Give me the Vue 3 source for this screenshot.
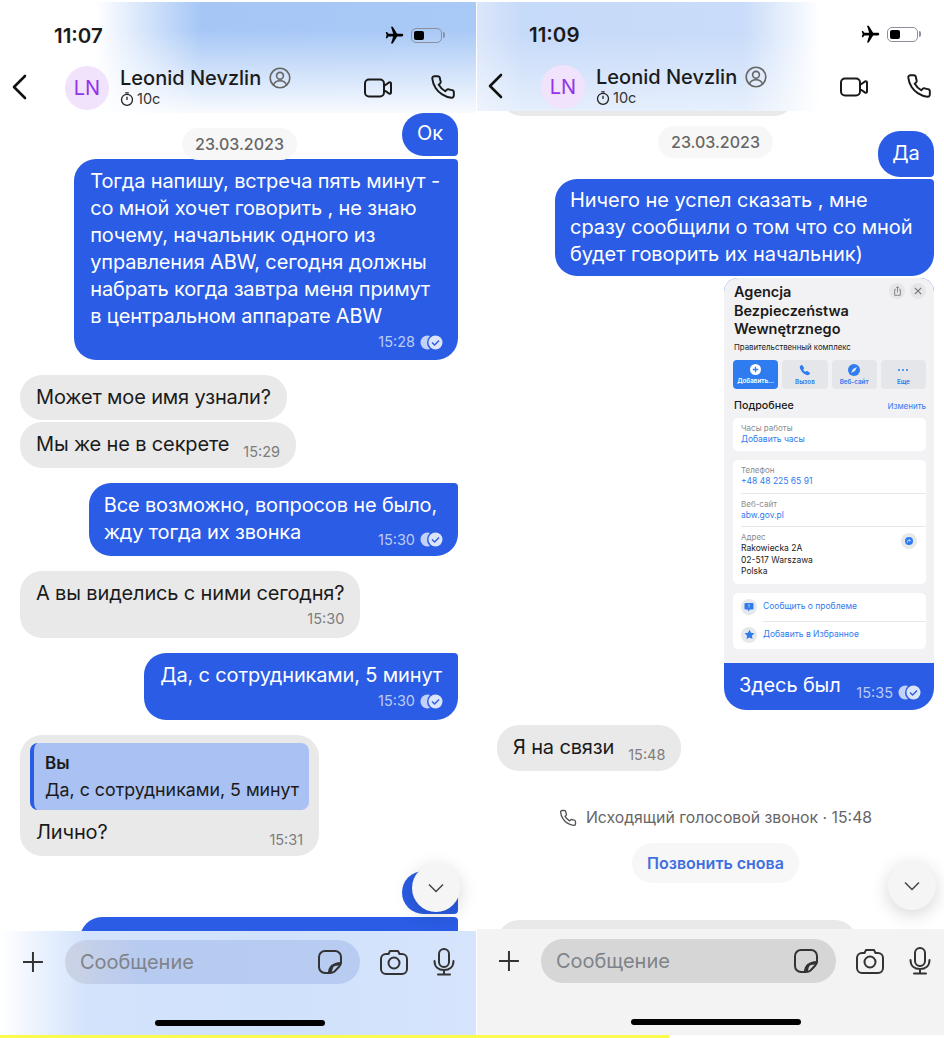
<template>
  <div class="page">
    <div class="screens">
      <section v-for="screen in screens" :key="screen.time" class="screen" :class="screen.cls">
        <div class="chat">
          <template v-for="(m, i) in screen.messages" :key="i">
            <div v-if="m.type === 'call'" class="call">
              <svg width="18" height="18" viewBox="0 0 24 24" fill="none" stroke="#555" stroke-width="1.8">
                <path :d="phonePath" />
              </svg>
              <span>{{ m.text }}</span>
            </div>
            <div v-else-if="m.type === 'again'" class="again">{{ m.text }}</div>
            <div v-else class="bubble" :class="[m.side, m.cls, { cont: m.cont, stub: m.stub, flat: m.flat, tail: m.tail, tight: m.tight, photo: m.type === 'card' }]">
              <div v-if="m.type === 'card'" class="card">
                <div class="card-head">
                  <h3>Agencja<br />Bezpieczeństwa<br />Wewnętrznego</h3>
                  <div class="card-tools">
                    <span class="tool">
                      <svg width="9" height="10" viewBox="0 0 12 14" fill="none" stroke="#777" stroke-width="1.2">
                        <path d="M3.5 5H2v8h8V5H8.5M6 9V1M3.8 3.2 6 1l2.2 2.2" />
                      </svg>
                    </span>
                    <span class="tool">
                      <svg width="8" height="8" viewBox="0 0 10 10" stroke="#777" stroke-width="1.5">
                        <path d="M1 1l8 8M9 1l-8 8" />
                      </svg>
                    </span>
                  </div>
                </div>
                <p class="card-sub">Правительственный комплекс</p>
                <div class="card-actions">
                  <div class="action primary">
                    <svg width="11" height="11" viewBox="0 0 12 12">
                      <circle cx="6" cy="6" r="6" fill="#fff" />
                      <path d="M6 3v6M3 6h6" stroke="#2f7bf0" stroke-width="1.4" />
                    </svg>
                    <span>Добавить...</span>
                  </div>
                  <div class="action">
                    <svg width="12" height="12" viewBox="0 0 24 24" fill="#2f7bf0">
                      <path d="M6.6 2.5 10 7.6c.4.6.3 1.3-.2 1.8L8 11.2a15 15 0 0 0 4.800 4.800l1.800-1.800c.5-.5 1.200-.6 1.800-.2l5.100 3.400c.7.5.8 1.400.3 2l-2 2.200c-.7.7-1.700 1-2.700.8C10 21 3 14 1.600 6.900c-.2-1 .1-2 .8-2.700l2.200-2c.6-.5 1.500-.4 2 .3z" />
                    </svg>
                    <span>Вызов</span>
                  </div>
                  <div class="action">
                    <svg width="12" height="12" viewBox="0 0 12 12">
                      <circle cx="6" cy="6" r="6" fill="#2f7bf0" />
                      <path d="M9 3 7 7 3 9l2-4z" fill="#e4e6ea" />
                    </svg>
                    <span>Веб-сайт</span>
                  </div>
                  <div class="action">
                    <svg width="12" height="12" viewBox="0 0 12 12" fill="#2f7bf0">
                      <circle cx="2" cy="6" r="1" />
                      <circle cx="6" cy="6" r="1" />
                      <circle cx="10" cy="6" r="1" />
                    </svg>
                    <span>Еще</span>
                  </div>
                </div>
                <div class="card-title">
                  <b>Подробнее</b>
                  <span>Изменить</span>
                </div>
                <div class="panel">
                  <div class="row">
                    <small>Часы работы</small>
                    <a>Добавить часы</a>
                  </div>
                </div>
                <div class="panel">
                  <div class="row">
                    <small>Телефон</small>
                    <a>+48 48 225 65 91</a>
                  </div>
                  <div class="row">
                    <small>Веб-сайт</small>
                    <a>abw.gov.pl</a>
                  </div>
                  <div class="row address">
                    <small>Адрес</small>
                    <span>Rakowiecka 2A</span>
                    <span>02-517 Warszawa</span>
                    <span>Polska</span>
                    <i class="route">
                      <svg width="8" height="8" viewBox="0 0 8 8">
                        <circle cx="4" cy="4" r="4" fill="#2f7bf0" />
                        <path d="M2.500 5.500V4.200c0-.5.300-.8.800-.8h2M4.300 2.300l1.100 1.100-1.100 1.100" fill="none" stroke="#fff" stroke-width=".7" />
                      </svg>
                    </i>
                  </div>
                </div>
                <div class="panel links">
                  <div class="link">
                    <i>
                      <svg width="10" height="10" viewBox="0 0 10 10">
                        <path d="M1.500 1h7a1 1 0 0 1 1 1v4.500a1 1 0 0 1-1 1H6L4 9.500V7.500H1.500a1 1 0 0 1-1-1V2a1 1 0 0 1 1-1z" fill="#2f7bf0" />
                        <path d="M5 2.300v2.400M5 5.500v.6" stroke="#e9edf3" stroke-width=".9" />
                      </svg>
                    </i>
                    <a>Сообщить о проблеме</a>
                  </div>
                  <div class="link">
                    <i>
                      <svg width="11" height="11" viewBox="0 0 24 24" fill="#2f7bf0">
                        <path d="m12 1.500 3.200 6.900 7.500.9-5.500 5.200 1.400 7.500L12 18.300l-6.600 3.700 1.400-7.500L1.300 9.300l7.500-.9z" />
                      </svg>
                    </i>
                    <a>Добавить в Избранное</a>
                  </div>
                </div>
              </div>

              <div v-if="m.reply" class="reply">
                <b>{{ m.reply.author }}</b>
                <span>{{ m.reply.text }}</span>
              </div>

              <div class="lines" v-if="m.lines">
                <div
                  v-for="(line, n) in m.lines"
                  :key="n"
                  class="line"
                  :class="{ inline: m.meta && m.meta.inline && n === m.lines.length - 1 }"
                >
                  <span>{{ line }}</span>
                  <span v-if="m.meta && m.meta.inline && n === m.lines.length - 1" class="meta">
                    {{ m.meta.time }}
                    <svg v-if="m.side === 'out'" class="checks" width="24" height="15" viewBox="0 0 24 15">
                      <circle cx="7.500" cy="7.500" r="7" fill="#c3d1f7" />
                      <circle cx="15.500" cy="7.500" r="8.500" fill="#2a5ce5" />
                      <circle cx="15.500" cy="7.500" r="7" fill="#dbe4fb" />
                      <path d="M12 7.500l2.600 2.600L19 5.600" fill="none" stroke="#2a5ce5" stroke-width="1.400" />
                    </svg>
                  </span>
                </div>
              </div>
              <div v-if="m.meta && !m.meta.inline" class="meta own">
                {{ m.meta.time }}
                <svg v-if="m.side === 'out'" class="checks" width="24" height="15" viewBox="0 0 24 15">
                  <circle cx="7.500" cy="7.500" r="7" fill="#c3d1f7" />
                  <circle cx="15.500" cy="7.500" r="8.500" fill="#2a5ce5" />
                  <circle cx="15.500" cy="7.500" r="7" fill="#dbe4fb" />
                  <path d="M12 7.500l2.600 2.600L19 5.600" fill="none" stroke="#2a5ce5" stroke-width="1.400" />
                </svg>
              </div>
            </div>
          </template>
        </div>

        <div class="date-pill">23.03.2023</div>

        <button class="down">
          <svg width="18" height="10" viewBox="0 0 18 10" fill="none" stroke="#444" stroke-width="1.500">
            <path d="M2 1.500 9 8.500l7-7" />
          </svg>
        </button>

        <header class="top">
          <div class="status">
            <span class="clock">{{ screen.time }}</span>
            <div class="status-icons">
              <svg width="21" height="21" viewBox="0 0 24 24" fill="#000">
                <path transform="rotate(90 12 12)" d="M21 16v-2l-8-5V3.500c0-.83-.67-1.500-1.500-1.500S10 2.670 10 3.500V9l-8 5v2l8-2.500V19l-2 1.500V22l3.500-1 3.500 1v-1.500L13 19v-5.500l8 2.500z" />
              </svg>
              <div class="battery"><i></i></div>
            </div>
          </div>
          <div class="nav">
            <svg class="back" width="16" height="26" viewBox="0 0 16 26" fill="none" stroke="#111" stroke-width="2.600" stroke-linecap="round" stroke-linejoin="round">
              <path d="M14 2 3 13l11 11" />
            </svg>
            <div class="avatar">LN</div>
            <div class="who">
              <div class="name">
                Leonid Nevzlin
                <svg width="22" height="22" viewBox="0 0 22 22" fill="none" stroke="#666" stroke-width="1.600">
                  <circle cx="11" cy="11" r="9.800" />
                  <circle cx="11" cy="8.800" r="3.400" />
                  <path d="M4.500 18c1-3 3.500-4.200 6.500-4.200s5.500 1.200 6.500 4.200" />
                </svg>
              </div>
              <div class="timer">
                <svg width="14" height="14" viewBox="0 0 14 14" fill="none" stroke="#222" stroke-width="1.300">
                  <circle cx="7" cy="7.800" r="5.500" />
                  <path d="M7 4.800V8M5.200.8h3.600" />
                </svg>
                10с
              </div>
            </div>
            <div class="nav-actions">
              <svg width="28" height="22" viewBox="0 0 28 22" fill="none" stroke="#1a1a1a" stroke-width="2" stroke-linejoin="round">
                <rect x="1" y="2.500" width="19" height="17" rx="4" />
                <path d="M20 9l5.200-3.600c.8-.5 1.800 0 1.800 1v9.200c0 1-1 1.500-1.800 1L20 13z" />
              </svg>
              <svg class="call-icon" width="26" height="26" viewBox="0 0 24 24" fill="none" stroke="#1a1a1a" stroke-width="1.800">
                <path :d="phonePath" />
              </svg>
            </div>
          </div>
        </header>

        <footer class="bottom">
          <div class="composer">
            <svg width="22" height="22" viewBox="0 0 22 22" stroke="#333" stroke-width="2">
              <path d="M11 1v20M1 11h20" />
            </svg>
            <div class="input">
              <span>Сообщение</span>
              <svg width="26" height="26" viewBox="0 0 26 26" fill="none" stroke="#333" stroke-width="2" stroke-linejoin="round">
                <path d="M8 2h10a6 6 0 0 1 6 6v5c0 2-.8 3.500-2 4.800l-4.500 4.700C16.200 23.600 15 24 13 24H8a6 6 0 0 1-6-6V8a6 6 0 0 1 6-6z" />
                <path d="M12 24c0-6 3-9.500 12-10-1 .9-3.500 2-6 2-2 0-3.500 3-4 7" />
              </svg>
            </div>
            <div class="composer-tools">
              <svg width="28" height="26" viewBox="0 0 28 26" fill="none" stroke="#333" stroke-width="2" stroke-linejoin="round">
                <path d="M6 5h2.500l1.500-3h8l1.500 3H22a5 5 0 0 1 5 5v10a5 5 0 0 1-5 5H6a5 5 0 0 1-5-5V10a5 5 0 0 1 5-5z" />
                <circle cx="14" cy="14" r="5.500" />
              </svg>
              <svg width="22" height="28" viewBox="0 0 22 28" fill="none" stroke="#333" stroke-width="2" stroke-linecap="round">
                <rect x="6" y="1" width="10" height="18" rx="5" />
                <path d="M1.500 13c0 6 4 9 9.500 9s9.500-3 9.500-9M11 22v4.500M5 26.500h12" />
              </svg>
            </div>
          </div>
          <div class="home"></div>
        </footer>
      </section>
    </div>
    <div class="strip"></div>
  </div>
</template>

<script setup>
const phonePath =
  'M22 16.920v3a2 2 0 0 1-2.180 2 19.790 19.790 0 0 1-8.630-3.070 19.500 19.500 0 0 1-6-6 19.790 19.790 0 0 1-3.070-8.670A2 2 0 0 1 4.110 2h3a2 2 0 0 1 2 1.720c.13.96.36 1.900.7 2.810a2 2 0 0 1-.45 2.110L8.090 9.910a16 16 0 0 0 6 6l1.270-1.270a2 2 0 0 1 2.110-.45c.91.34 1.850.57 2.810.7A2 2 0 0 1 22 16.920z';

const screens = [
  {
    time: '11:07',
    cls: 'first',
    messages: [
      { side: 'out', lines: ['Ок'], tail: true },
      {
        side: 'out',
        cont: true,
        cls: 'roomy',
        lines: [
          'Тогда напишу, встреча пять минут -',
          'со мной хочет говорить , не знаю',
          'почему, начальник одного из',
          'управления ABW, сегодня должны',
          'набрать когда завтра меня примут',
          'в центральном аппарате ABW',
        ],
        meta: { time: '15:28' },
      },
      { side: 'in', lines: ['Может мое имя узнали?'] },
      { side: 'in', cont: true, lines: ['Мы же не в секрете'], meta: { time: '15:29', inline: true } },
      {
        side: 'out',
        cls: 'roomier',
        lines: ['Все возможно, вопросов не было,', 'жду тогда их звонка'],
        meta: { time: '15:30', inline: true },
      },
      { side: 'in', lines: ['А вы виделись с ними сегодня?'], meta: { time: '15:30' } },
      { side: 'out', lines: ['Да, с сотрудниками, 5 минут'], meta: { time: '15:30' } },
      {
        side: 'in',
        reply: { author: 'Вы', text: 'Да, с сотрудниками, 5 минут' },
        lines: ['Лично?'],
        meta: { time: '15:31', inline: true },
      },
      { side: 'out', lines: ['Ок'], tail: true },
      { side: 'out', cont: true, stub: true },
    ],
  },
  {
    time: '11:09',
    cls: 'second',
    messages: [
      { side: 'in', stub: true, flat: true },
      { side: 'out', lines: ['Да'], tail: true },
      {
        side: 'out',
        cont: true,
        tight: true,
        lines: [
          'Ничего не успел сказать , мне',
          'сразу сообщили о том что со мной',
          'будет говорить их начальник)',
        ],
      },
      { side: 'out', cont: true, type: 'card', lines: ['Здесь был'], meta: { time: '15:35', inline: true } },
      { side: 'in', lines: ['Я на связи'], meta: { time: '15:48', inline: true } },
      { type: 'call', text: 'Исходящий голосовой звонок · 15:48' },
      { type: 'again', text: 'Позвонить снова' },
      { side: 'in', stub: true },
    ],
  },
];
</script>

<style>
html,
body {
  margin: 0;
  background: #fff;
}
</style>

<style scoped>
.page {
  width: 944px;
  height: 1038px;
  overflow: hidden;
  font-family: Inter, 'Noto Sans', sans-serif;
  color: #1b1b1b;
}

.screens {
  display: flex;
  height: 1035px;
}

.screen {
  position: relative;
  flex: 0 0 477px;
  height: 1035px;
  overflow: hidden;
  background: #fff;
}

.screen.second {
  margin-left: -1px;
}

.strip {
  width: 669px;
  height: 3px;
  background: #fbfb4e;
}

/* chat column */
.chat {
  display: flex;
  flex-direction: column;
  align-items: flex-start;
  padding: 113px 19px 0 20px;
}

.second .chat {
  padding-top: 40px;
  padding-left: 21px;
}

.bubble {
  box-sizing: border-box;
  margin-top: 15px;
  padding: 9px 16px;
  border-radius: 22px;
  font-size: 20px;
  line-height: 27px;
  letter-spacing: -0.15px;
  white-space: nowrap;
}

.bubble:has(.inline) {
  padding-bottom: 10px;
}

.bubble:first-child {
  margin-top: 0;
}

.bubble.cont {
  margin-top: 2px;
}

.first .tail + .bubble.cont {
  margin-top: 3px;
}

.bubble.out {
  align-self: flex-end;
  color: #fff;
  background: #2a5ce5;
  border-top-right-radius: 4px;
}

.bubble.roomy {
  padding-right: 18px;
}

.bubble.roomier {
  padding-right: 21px;
  padding-left: 15px;
}

.bubble.out.tail {
  padding: 7px 10px 9px;
  min-width: 56px;
  text-align: center;
  border-top-right-radius: 20px;
  border-bottom-right-radius: 4px;
}

.second .bubble.out.tail {
  padding: 9px 10px 10px;
}

.bubble.out.tight {
  width: 379px;
  padding: 8px 0 8px 15px;
  letter-spacing: -0.05px;
}

.bubble.in {
  background: #e9e9e9;
}

.bubble.stub {
  width: 378px;
  height: 130px;
}

.second .bubble.stub {
  width: 360px;
}

.second .bubble.flat {
  width: 296px;
  height: 76px;
  margin-left: 3px;
}

.meta {
  display: inline-flex;
  align-items: center;
  gap: 5px;
  font-size: 14.5px;
  line-height: 20px;
  letter-spacing: 0;
  color: #7d7d7d;
}

.out .meta {
  margin-right: -2px;
  color: #bccbf6;
}

.roomy .meta {
  margin-right: -4px;
}

.roomier .meta {
  margin-right: -7px;
}

.meta.own {
  display: flex;
  justify-content: flex-end;
  margin-top: 2px;
}

.lines:has(.line:nth-child(2)) + .meta.own {
  margin-bottom: -1px;
}

.line.inline {
  display: flex;
  justify-content: space-between;
  gap: 14px;
}

.line.inline .meta {
  position: relative;
  top: 7px;
}

/* reply quote */
.bubble.in:has(.reply) {
  padding: 8px 10px 10px;
}

.bubble.in:has(.reply) .lines {
  padding: 9px 6px 0;
}

.reply {
  display: flex;
  flex-direction: column;
  gap: 5px;
  padding: 9px 10px 9px 11px;
  border-left: 4px solid #2a5ce5;
  border-radius: 8px;
  background: #aac1f3;
  font-size: 17.8px;
  line-height: 22px;
  letter-spacing: 0;
}

.reply b {
  font-weight: 600;
  font-size: 17px;
}

/* sticky pieces */
.date-pill {
  position: absolute;
  top: 128px;
  left: 182px;
  width: 115px;
  height: 32px;
  border-radius: 16px;
  background: #f7f7f7;
  color: #666;
  font-size: 16px;
  font-weight: 500;
  line-height: 32px;
  text-align: center;
}

.second .date-pill {
  top: 126px;
}

.down {
  position: absolute;
  top: 864px;
  left: 412px;
  width: 48px;
  height: 48px;
  padding: 0;
  border: 0;
  border-radius: 50%;
  background: #f5f5f5;
  box-shadow: 0 4px 18px rgba(0, 0, 0, 0.17);
}

.second .down {
  top: 862px;
}

/* call note */
.call {
  align-self: center;
  display: flex;
  align-items: center;
  gap: 9px;
  margin-top: 37px;
  color: #666;
  font-size: 15.800px;
  line-height: 20px;
}

.again {
  align-self: center;
  margin-top: 15px;
  padding: 0 15px;
  height: 40px;
  border-radius: 20px;
  background: #f7f7f7;
  color: #3f6fe0;
  font-size: 16px;
  font-weight: 600;
  line-height: 40px;
}

.again + .bubble {
  margin-top: 37px;
}

/* header */
.top {
  position: absolute;
  top: 0;
  left: 0;
  right: 0;
  height: 113px;
  box-sizing: border-box;
  border-top: 2px solid #fff;
  background:
    linear-gradient(to bottom, rgba(255, 255, 255, 0) 25%, rgba(255, 255, 255, 0.92) 100%),
    linear-gradient(to right, #fff 20%, #a6c7f6 42%, #a9c9f6 100%);
}

.second .top {
  left: 1px;
  height: 111px;
  background:
    linear-gradient(to bottom, rgba(255, 255, 255, 0) 30%, rgba(255, 255, 255, 0.55) 100%),
    linear-gradient(to right, #dbe6fb 0, #c6daf9 10%, #c9dcf9 56%, #fff 72%);
}

.status {
  display: flex;
  align-items: center;
  justify-content: space-between;
  height: 28px;
  margin-top: 19px;
  padding: 0 35px 0 54px;
}

.second .status {
  margin-top: 18px;
  padding-left: 52px;
}

.clock {
  font-size: 20.500px;
  font-weight: 600;
}

.status-icons {
  display: flex;
  align-items: center;
  gap: 6px;
}

.battery {
  position: relative;
  box-sizing: border-box;
  width: 31px;
  height: 15px;
  padding: 2px;
  border: 1px solid #8c8fa0;
  border-radius: 5px;
}

.battery::after {
  content: '';
  position: absolute;
  top: 3px;
  right: -4px;
  width: 2px;
  height: 6px;
  border-radius: 0 2px 2px 0;
  background: #8c8fa0;
}

.battery i {
  display: block;
  width: 10px;
  height: 100%;
  border-radius: 2px;
  background: #000;
}

.nav {
  display: flex;
  align-items: center;
  height: 44px;
  margin-top: 17px;
  padding: 0 21px 0 11px;
}

.second .nav {
  padding-left: 10px;
}

.back {
  flex: none;
  margin-top: -3px;
}

.avatar {
  flex: none;
  width: 44px;
  height: 44px;
  margin-left: 38px;
  border-radius: 50%;
  background: #f1e3fc;
  color: #9333ea;
  font-size: 20px;
  line-height: 44px;
  text-align: center;
}

.who {
  margin-top: -2px;
  margin-left: 11px;
}

.name {
  display: flex;
  align-items: center;
  gap: 8px;
  font-size: 20px;
  font-weight: 500;
  line-height: 24px;
}

.timer {
  display: flex;
  align-items: center;
  gap: 3px;
  font-size: 14.500px;
  line-height: 18px;
  color: #333;
}

.nav-actions {
  display: flex;
  align-items: center;
  gap: 38px;
  margin-left: auto;
}

.call-icon {
  margin-top: -2px;
}

/* footer */
.bottom {
  position: absolute;
  left: 0;
  right: 0;
  bottom: 0;
  height: 104px;
  background: linear-gradient(to right, #fff 0, #d3e3fc 18%, #d0e1fb 60%, #d6e5fc 100%);
}

.second .bottom {
  left: 1px;
  height: 106px;
  background: #f3f3f3;
}

.composer {
  display: flex;
  align-items: center;
  height: 44px;
  margin-top: 9px;
  padding: 0 22px;
}

.second .composer {
  margin-top: 10px;
  padding-left: 21px;
}

.input {
  display: flex;
  align-items: center;
  justify-content: space-between;
  box-sizing: border-box;
  width: 296px;
  height: 44px;
  margin-left: 21px;
  padding: 0 17px 0 15px;
  border-radius: 22px;
  background: linear-gradient(to right, #ccd3e5 0, #b7caf0 25%, #b8cbf1 100%);
  color: #7f8389;
  font-size: 20px;
}

.second .input {
  background: #d6d6d6;
}

.composer-tools {
  display: flex;
  align-items: center;
  gap: 25px;
  margin-left: 20px;
}

.home {
  width: 170px;
  height: 6px;
  margin: 36px 0 0 155px;
  border-radius: 3px;
  background: #000;
}

.second .home {
  margin-left: 154px;
}

/* place card screenshot */
.bubble.photo {
  width: 210px;
  padding: 0;
  overflow: hidden;
  border-top-right-radius: 14px;
  border-top-left-radius: 14px;
}

.bubble.photo .lines {
  padding: 9px 14px 11px 15px;
}

.card {
  box-sizing: border-box;
  height: 385px;
  padding: 5px 8px 0 9px;
  background: #f2f2f4;
  color: #1a1a1a;
  line-height: 1.2;
  letter-spacing: 0;
}

.card-head {
  display: flex;
  justify-content: space-between;
}

.card-head h3 {
  margin: 0;
  padding-left: 1px;
  font-size: 14.500px;
  font-weight: 600;
  line-height: 18.500px;
}

.card-tools {
  display: flex;
  gap: 5px;
}

.tool {
  display: flex;
  align-items: center;
  justify-content: center;
  width: 16px;
  height: 16px;
  border-radius: 50%;
  background: #e6e6e8;
}

.card-sub {
  margin: 2px 0 0 1px;
  font-size: 7.800px;
  line-height: 12px;
}

.card-actions {
  display: grid;
  grid-template-columns: repeat(4, 1fr);
  gap: 4px;
  margin-top: 7px;
}

.action {
  display: flex;
  flex-direction: column;
  align-items: center;
  gap: 3px;
  height: 29px;
  padding-top: 4px;
  box-sizing: border-box;
  border-radius: 4px;
  background: #e4e6ea;
  color: #2f7bf0;
  font-size: 6.300px;
  font-weight: 600;
}

.action.primary {
  background: #2f7bf0;
  color: #fff;
}

.card-title {
  display: flex;
  align-items: center;
  justify-content: space-between;
  height: 14px;
  margin-top: 11px;
}

.card-title b {
  padding-left: 1px;
  font-size: 10.700px;
  font-weight: 500;
}

.card-title span {
  color: #2f7bf0;
  font-size: 8px;
}

.panel {
  margin-top: 9px;
  padding: 0 0 0 8px;
  border-radius: 5px;
  background: #fff;
  font-size: 8.500px;
}

.card-title + .panel {
  margin-top: 4px;
}

.row {
  position: relative;
  display: flex;
  flex-direction: column;
  height: 33px;
  box-sizing: border-box;
  padding-top: 5px;
  border-top: 1px solid #e8e8ea;
  line-height: 11.500px;
}

.row:first-child {
  border-top: 0;
}

.row small {
  color: #8c8c8c;
  font-size: 8px;
}

.row a,
.link a {
  color: #2f7bf0;
}

.row.address {
  height: 58px;
}

.route {
  position: absolute;
  top: 6px;
  right: 9px;
  display: flex;
  align-items: center;
  justify-content: center;
  width: 16px;
  height: 16px;
  border-radius: 50%;
  background: #e6e8ec;
}

.link {
  display: flex;
  align-items: center;
  gap: 6px;
  height: 28px;
}

.link i {
  display: flex;
  align-items: center;
  justify-content: center;
  width: 16px;
  height: 16px;
  border-radius: 50%;
  background: #e6e8ec;
}

.link + .link {
  position: relative;
}

.link + .link::before {
  content: '';
  position: absolute;
  top: 0;
  left: 22px;
  right: 0;
  border-top: 1px solid #e8e8ea;
}
</style>
